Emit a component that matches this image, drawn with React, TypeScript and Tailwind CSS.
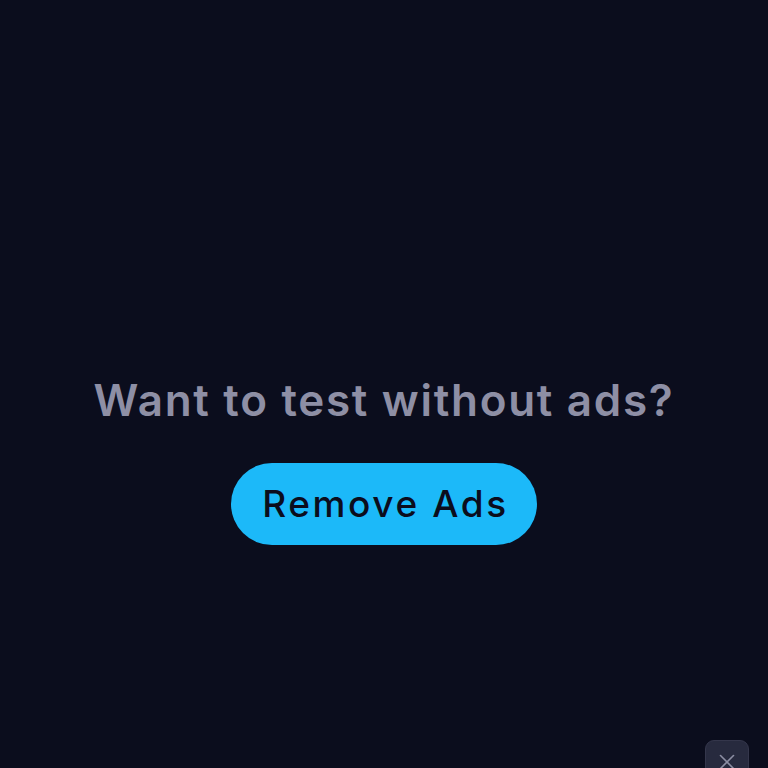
import { X } from "lucide-react";

export default function App() {
  return (
    <div
      className="relative h-[768px] w-[768px] overflow-hidden bg-[#0b0d1d]"
      style={{ fontFamily: "Inter, 'Open Sans', sans-serif" }}
    >
      <div className="flex h-full flex-col items-center pt-[373px]">
        <h1 className="text-[44px] font-semibold leading-[54px] tracking-[1.7px] text-[#8e8fa5]">
          Want to test without ads?
        </h1>
        <button
          type="button"
          className="mt-[36px] flex h-[82px] w-[306px] items-center justify-center rounded-full bg-[#1cb9f9] pl-[3px] text-[37px] font-medium tracking-[2.6px] text-[#0b0d1d]"
        >
          Remove Ads
        </button>
      </div>
      <button
        type="button"
        aria-label="Close"
        className="absolute left-[705px] top-[740px] flex h-[44px] w-[44px] items-center justify-center rounded-[9px] border border-[#34364b] bg-[#272a3e] text-[#8c8ea3]"
      >
        <X size={26} strokeWidth={1.5} />
      </button>
    </div>
  );
}
